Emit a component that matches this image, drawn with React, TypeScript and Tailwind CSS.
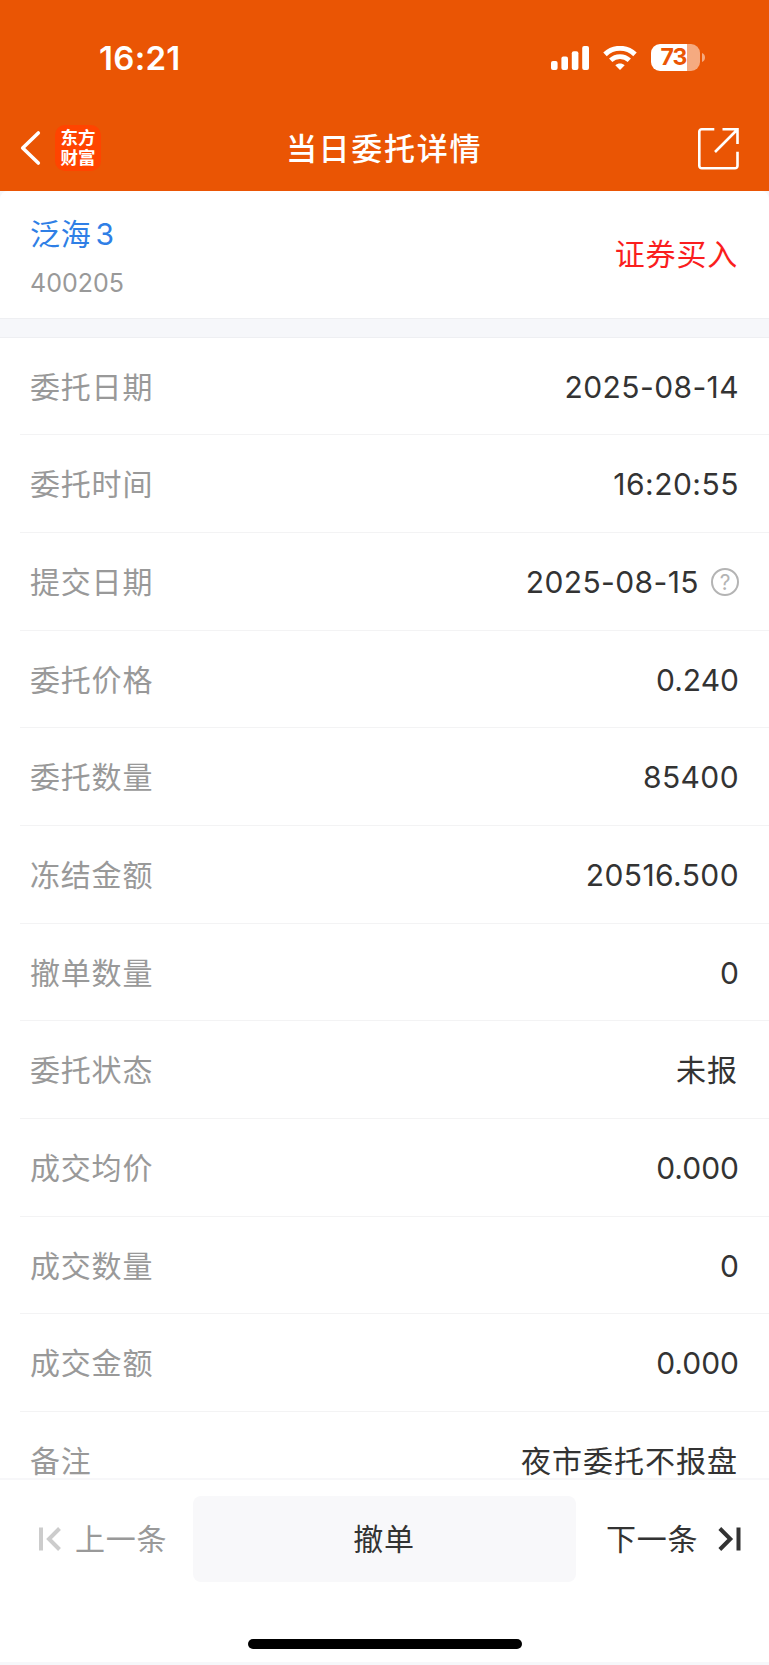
import { ReactNode } from 'react';

interface DetailRow {
  label: string;
  value: string;
  spacing?: string;
  hint?: boolean;
}

const rows: DetailRow[] = [
  { label: '委托日期', value: '2025-08-14', spacing: 'tracking-[0.4px]' },
  { label: '委托时间', value: '16:20:55', spacing: 'tracking-[0.5px]' },
  { label: '提交日期', value: '2025-08-15', spacing: 'tracking-[0.4px]', hint: true },
  { label: '委托价格', value: '0.240' },
  { label: '委托数量', value: '85400', spacing: 'tracking-[0.4px]' },
  { label: '冻结金额', value: '20516.500', spacing: 'tracking-[0.4px]' },
  { label: '撤单数量', value: '0' },
  { label: '委托状态', value: '未报', spacing: 'tracking-[1px] pr-px' },
  { label: '成交均价', value: '0.000' },
  { label: '成交数量', value: '0' },
  { label: '成交金额', value: '0.000' },
  { label: '备注', value: '夜市委托不报盘', spacing: 'tracking-[1px] pr-px' },
];

const StatusBar = () => (
  <div className="flex h-[115px] items-center justify-between pl-[99px] pr-[64px]">
    <span className="pt-0.5 text-[33px] leading-none font-semibold tracking-[0.3px]">16:21</span>
    <div className="flex items-center">
      <svg width="38" height="24" viewBox="0 0 38 24" fill="currentColor">
        <rect x="0" y="15" width="6.6" height="9" rx="2" />
        <rect x="10.4" y="10.6" width="6.6" height="13.4" rx="2" />
        <rect x="20.8" y="5.3" width="6.6" height="18.7" rx="2" />
        <rect x="31.2" y="0" width="6.8" height="24" rx="2" />
      </svg>
      <svg className="ml-3.5" width="34" height="24" viewBox="0 0 34 24" fill="none" stroke="currentColor">
        <path d="M2 8.4C10.5 .3 23.5 .3 32 8.4" strokeWidth="5" />
        <path d="M7.7 14.2C13 9.3 21 9.3 26.3 14.2" strokeWidth="4.8" />
        <path d="M17 24l-4.7-4.8c2.6-2.4 6.8-2.4 9.4 0z" fill="currentColor" stroke="none" />
      </svg>
      <div className="ml-[14px] flex h-[27px] w-[49px] items-center justify-center overflow-hidden rounded-[9px] bg-linear-to-r from-white from-[74%] to-[#f5aa80] to-[74%] pr-1 text-[23px] font-bold tracking-[-0.8px] text-[#ea5504]">
        73
      </div>
      <svg className="ml-0.5" width="3" height="9" viewBox="0 0 3 9">
        <path d="M0 0c4 1.5 4 7.5 0 9z" fill="#f5aa80" />
      </svg>
    </div>
  </div>
);

const NavBar = () => (
  <div className="grid h-[66px] grid-cols-[1fr_auto_1fr] items-center pl-5 pr-[29px]">
    <div className="flex items-center">
      <svg width="22" height="36" viewBox="0 0 22 36" fill="none" stroke="white" strokeWidth="3.6" strokeLinecap="round" strokeLinejoin="round">
        <path d="M18.3 3L2.7 18l15.6 15" />
      </svg>
      <div className="ml-[13px] flex h-[46px] w-[46px] flex-col items-center justify-center rounded-[10px] bg-[#ff4400] pb-px text-[17.5px] leading-[19.5px] font-bold">
        <span>东方</span>
        <span>财富</span>
      </div>
    </div>
    <h1 className="pl-2 text-[31px] leading-none font-medium tracking-[1.7px]">当日委托详情</h1>
    <svg className="justify-self-end" width="43" height="43" viewBox="0 0 43 43" fill="none" stroke="white" strokeWidth="2.6">
      <path d="M17.3 2.3H4.8a2.5 2.5 0 0 0-2.5 2.5v34a2.5 2.5 0 0 0 2.5 2.5h33.2a2.5 2.5 0 0 0 2.5-2.5V24.7" />
      <path d="M25.5 2.3h15V17M39.9 3L18 25" />
    </svg>
  </div>
);

const HelpIcon = () => (
  <span className="ml-3 flex h-7 w-7 items-center justify-center rounded-full border-2 border-[#b4b4b4] pt-px text-[21px] leading-none tracking-normal text-[#b4b4b4]">
    ?
  </span>
);

const Row = ({ label, value, spacing, children }: { label: string; value: string; spacing?: string; children?: ReactNode }) => (
  <div className="ml-5 flex h-[97.7px] shrink-0 items-center justify-between border-b border-[#f3f3f4] pt-[1.5px] pr-[30px] pl-2.5">
    <span className="tracking-[0.8px] text-[#999]">{label}</span>
    <span className="flex items-center text-[#333]">
      <span className={spacing}>{value}</span>
      {children}
    </span>
  </div>
);

const App = () => (
  <div
    className="flex h-[1665px] w-[769px] flex-col overflow-hidden bg-white text-[30px] leading-none"
    style={{ fontFamily: 'Inter, "Noto Sans CJK SC", sans-serif' }}
  >
    <header className="h-[191px] shrink-0 bg-[#ea5504] text-white">
      <StatusBar />
      <NavBar />
    </header>

    <div className="shrink-0 bg-[#f6f7fa]">
      <section className="flex h-[127px] items-center justify-between rounded-t-lg bg-white pl-[30px] pr-[31px]">
        <div className="pt-1.5">
          <div className="flex tracking-[0.8px] text-[#2f7fe6]">
            泛海<span className="ml-1">3</span>
          </div>
          <div className="mt-[22px] text-[25px] text-[#999]">400205</div>
        </div>
        <span className="pb-0.5 tracking-[0.8px] text-[#fa1e1e]">证券买入</span>
      </section>
      <div className="h-[19.5px] border-y border-[#eeeff2]" />
    </div>

    <main className="flex min-h-0 flex-1 flex-col overflow-hidden">
      {rows.map((row) => (
        <Row key={row.label} label={row.label} value={row.value} spacing={row.spacing}>
          {row.hint && <HelpIcon />}
        </Row>
      ))}
    </main>

    <footer className="h-[187px] shrink-0 border-t-2 border-b-[3px] border-t-[#f7f7f9] border-b-[#f6f7fa] bg-white">
      <div className="flex h-[118px] items-center">
        <button className="flex w-[192.5px] items-center pl-[38px] tracking-[0.8px] text-[#999]">
          <svg width="23" height="24" viewBox="0 0 23 24" fill="none" stroke="#ccc" strokeWidth="4">
            <path d="M3 .5v23M21.5 1.5L11 12l10.5 10.5" />
          </svg>
          <span className="ml-[14px]">上一条</span>
        </button>
        <button className="h-[86px] w-[383px] rounded-lg bg-[#f8f8fa] tracking-[0.8px] text-[#333]">撤单</button>
        <button className="flex items-center pl-[30.5px] tracking-[0.8px] text-[#333]">
          <span>下一条</span>
          <svg className="ml-5" width="23" height="24" viewBox="0 0 23 24" fill="none" stroke="currentColor" strokeWidth="4">
            <path d="M20.5 .5v23M1.8 1.5L12.3 12l-10.5 10.5" />
          </svg>
        </button>
      </div>
      <div className="mx-auto mt-[41px] h-2.5 w-[274px] rounded-full bg-black" />
    </footer>
  </div>
);

export default App;
